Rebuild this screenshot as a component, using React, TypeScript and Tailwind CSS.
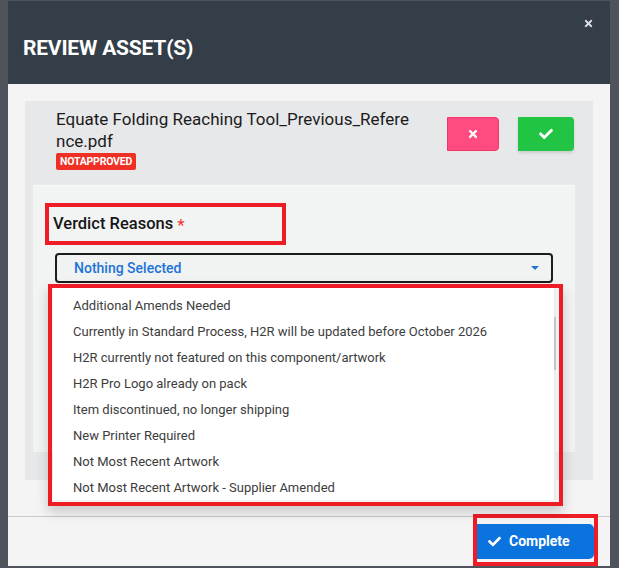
import React from 'react';
import { FaTimes, FaCheck } from 'react-icons/fa';

const reasons = [
  'Additional Amends Needed',
  'Currently in Standard Process, H2R will be updated before October 2026',
  'H2R currently not featured on this component/artwork',
  'H2R Pro Logo already on pack',
  'Item discontinued, no longer shipping',
  'New Printer Required',
  'Not Most Recent Artwork',
  'Not Most Recent Artwork - Supplier Amended',
];

function ReasonSelect() {
  return (
    <div className="relative mx-[10px] mt-[8px]">
      <div className="h-[30px] border-2 border-[#1c1c1c] rounded-[4px] bg-[#f1f2f2] flex items-center justify-between pl-[17px] pr-[12px]">
        <span className="text-[14px] font-medium text-[#1d74d8]">Nothing Selected</span>
        <span className="w-0 h-0 border-l-[4px] border-r-[4px] border-t-[4px] border-l-transparent border-r-transparent border-t-[#1d74d8]" />
      </div>

      {/* open menu, with the red review frame round it */}
      <div className="absolute z-10 top-[calc(100%+1px)] -left-[7px] -right-[10px] h-[222px] border-4 border-[#ee1c25] shadow-[0_6px_12px_rgba(0,0,0,0.18)]">
        <div className="relative ml-[1px] mr-[3px] h-[212px] bg-white pt-[5px] border-r-2 border-[#ececec]">
          {reasons.map((r) => (
            <div key={r} className="h-[26px] flex items-center pl-[20px] text-[13px] text-[#3d3d3d] whitespace-nowrap">
              {r}
            </div>
          ))}
          <div className="absolute -right-[2px] top-[29px] w-[2px] h-[53px] bg-[#c4c4c4]" />
        </div>
      </div>
    </div>
  );
}

export default function App() {
  return (
    <div
      className="w-[619px] h-[568px] bg-[#4f535b] pt-[1px] pl-[8px] overflow-hidden"
      style={{ fontFamily: 'Roboto, "Liberation Sans", sans-serif' }}
    >
      <div className="w-[602px] h-[565px] bg-[#f4f4f4] flex flex-col">
        {/* header */}
        <div className="h-[83px] shrink-0 bg-[#343e48] flex items-start justify-between pl-[15px] pr-[16px]">
          <h1 className="mt-[35px] text-[21px] leading-[24px] font-bold text-white tracking-[-0.2px]">REVIEW ASSET(S)</h1>
          <FaTimes className="mt-[17px] w-[11px] h-[11px] text-[#dcdde0]" />
        </div>

        {/* body */}
        <div className="shrink-0 pt-[17px] px-[17px] pb-[36px]">
          <div className="bg-[#e7e8ea] pt-[7px] pb-[28px]">
            <div className="flex justify-between pl-[31px] pr-[19px]">
              <div>
                <div className="text-[17px] leading-[22px] text-[#1b1b1b]">
                  Equate Folding Reaching Tool_Previous_Refere
                  <br />
                  nce.pdf
                </div>
                <div className="w-fit mt-[1px] h-[17px] px-[4px] rounded-[2px] bg-[#ee3124] text-white text-[10.5px] leading-[17px] font-bold tracking-[-0.2px]">
                  NOTAPPROVED
                </div>
              </div>
              <div className="flex gap-[19px] mt-[9px]">
                <button className="w-[52px] h-[34px] bg-[#ff4b80] border border-[#f4356c] rounded-r-[4px] flex items-center justify-center">
                  <FaTimes className="w-[12px] h-[12px] text-white" />
                </button>
                <button className="w-[56px] h-[34px] bg-[#22c443] rounded-r-[4px] shadow-[0_2px_3px_rgba(0,0,0,0.12)] flex items-center justify-center">
                  <FaCheck className="w-[14px] h-[14px] text-white" />
                </button>
              </div>
            </div>

            <div className="mt-[15px] ml-[8px] mr-[18px] h-[267px] bg-[#f2f3f3] border-t border-[#f8f9f9] pt-[17px] px-[12px]">
              <div className="w-[241px] h-[42px] border-4 border-[#ee1c25] pl-[4px] flex items-center">
                <span className="text-[16.5px] font-medium text-[#161616]">Verdict Reasons</span>
                <span className="ml-[4px] text-[17px] text-[#e8362e] leading-none mt-[2px]">*</span>
              </div>
              <ReasonSelect />
            </div>
          </div>
        </div>

        {/* footer */}
        <div className="h-[50px] shrink-0 border-t border-[#c9c9c9] flex justify-end items-start pr-[12px]">
          <div className="-mt-[3px] w-[125px] h-[52px] border-4 border-[#ee1c25] pt-[6px]">
            <button className="w-full h-[35px] bg-[#0a73de] rounded-r-[5px] flex items-center gap-[8px] pl-[11px] text-white text-[14px] font-bold">
              <FaCheck className="w-[13px] h-[13px]" />
              Complete
            </button>
          </div>
        </div>
      </div>
    </div>
  );
}
